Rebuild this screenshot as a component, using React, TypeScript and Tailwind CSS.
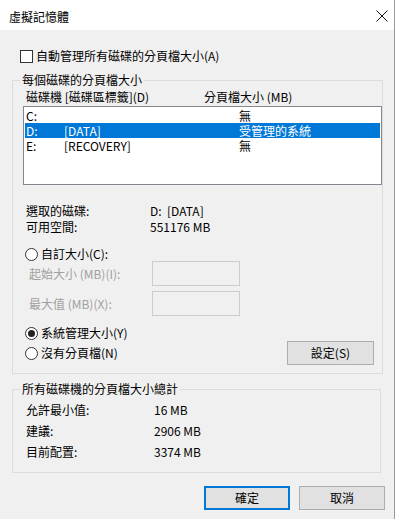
import React from "react";

const font = { fontFamily: '"Noto Sans CJK TC", "Noto Sans", sans-serif' };

function Radio({ checked, label }: { checked?: boolean; label: string }) {
  return (
    <div className="flex items-center h-[14px] gap-[3px] -ml-[1px]">
      <span className="w-[13px] h-[13px] rounded-full border border-[#333] bg-white flex items-center justify-center">
        {checked && <span className="w-[7px] h-[7px] rounded-full bg-[#222]" />}
      </span>
      <span className="leading-[14px]">{label}</span>
    </div>
  );
}

const drives = [
  { d: "C:", label: "", size: "無" },
  { d: "D:", label: "[DATA]", size: "受管理的系統", selected: true },
  { d: "E:", label: "[RECOVERY]", size: "無" },
];

const totals = [
  ["允許最小值:", "16 MB"],
  ["建議:", "2906 MB"],
  ["目前配置:", "3374 MB"],
];

export default function App() {
  return (
    <div className="w-[395px] h-[519px] bg-[#f0f0f0] border-r border-[#9a9a9a] text-[12px] text-black" style={font}>
      {/* title bar */}
      <div className="h-[30px] bg-white flex items-center justify-between pl-[9px] pr-[6px]">
        <span className="leading-[16px] mt-[3px]">虛擬記憶體</span>
        <svg width="12" height="12" viewBox="0 0 12 12" className="mt-[1px]">
          <path d="M0.5 0.5 L11.5 11.5 M11.5 0.5 L0.5 11.5" stroke="#111" strokeWidth="1" />
        </svg>
      </div>

      <div className="pl-[12px]">
        <div className="mt-[19px] h-[14px] flex items-center pl-[8px] gap-[3px]">
          <span className="w-[13px] h-[13px] border border-[#333] bg-white" />
          <span className="leading-[14px]">自動管理所有磁碟的分頁檔大小(A)</span>
        </div>

        {/* per-drive group */}
        <fieldset className="mt-[9px] w-[369px] border border-[#dcdcdc]">
          <legend className="ml-[7px] px-[2px] leading-[16px]">每個磁碟的分頁檔大小</legend>
          <div className="pl-[13px] pb-[8px]">
            <div className="mt-[2px] h-[14px] flex leading-[14px]">
              <span className="w-[178px]">磁碟機 [磁碟區標籤](D)</span>
              <span>分頁檔大小 (MB)</span>
            </div>

            <div className="mt-[2px] -ml-[3px] w-[359px] h-[79px] bg-white border border-[#828790] p-[1px]">
              {drives.map((r) => (
                <div
                  key={r.d}
                  className={`h-[15px] flex items-center pl-[1px] leading-[15px] ${r.selected ? "bg-[#0078d7] text-white" : ""}`}
                >
                  <span className="w-[38px]">{r.d}</span>
                  <span className="w-[175px]">{r.label}</span>
                  <span>{r.size}</span>
                </div>
              ))}
            </div>

            <div className="mt-[18px] flex h-[16px] leading-[16px]">
              <span className="w-[124px]">選取的磁碟:</span>
              <span>D:&nbsp; [DATA]</span>
            </div>
            <div className="flex h-[16px] leading-[16px]">
              <span className="w-[124px]">可用空間:</span>
              <span>551176 MB</span>
            </div>

            <div className="mt-[12px]">
              <Radio label="自訂大小(C):" />
            </div>
            <div className="flex items-center h-[25px] pl-[3px] text-[#a0a0a0]">
              <span className="w-[123px]">起始大小 (MB)(I):</span>
              <span className="w-[88px] h-[25px] border border-[#cccccc] bg-[#f0f0f0]" />
            </div>
            <div className="mt-[5px] flex items-center h-[25px] pl-[3px] text-[#a0a0a0]">
              <span className="w-[123px]">最大值 (MB)(X):</span>
              <span className="w-[88px] h-[25px] border border-[#cccccc] bg-[#f0f0f0]" />
            </div>

            <div className="mt-[10px] flex items-start">
              <div className="flex flex-col gap-[6px]">
                <Radio checked label="系統管理大小(Y)" />
                <Radio label="沒有分頁檔(N)" />
              </div>
              <button className="ml-auto mr-[8px] mt-[15px] w-[87px] h-[24px] bg-[#e1e1e1] border border-[#adadad] leading-[22px]">
                設定(S)
              </button>
            </div>
          </div>
        </fieldset>

        {/* totals group */}
        <fieldset className="mt-[7px] w-[369px] border border-[#dcdcdc]">
          <legend className="ml-[7px] px-[2px] leading-[16px]">所有磁碟機的分頁檔大小總計</legend>
          <div className="pl-[13px] pt-[2px] pb-[10px]">
            {totals.map(([k, v]) => (
              <div key={k} className="flex items-center h-[21px]">
                <span className="w-[128px]">{k}</span>
                <span>{v}</span>
              </div>
            ))}
          </div>
        </fieldset>
      </div>

      <div className="mt-[13px] flex justify-end gap-[9px] pr-[9px]">
        <button className="w-[86px] h-[24px] bg-[#e1e1e1] border-2 border-[#0078d7] leading-[20px]">確定</button>
        <button className="w-[86px] h-[24px] bg-[#e1e1e1] border border-[#adadad] leading-[22px]">取消</button>
      </div>
    </div>
  );
}
